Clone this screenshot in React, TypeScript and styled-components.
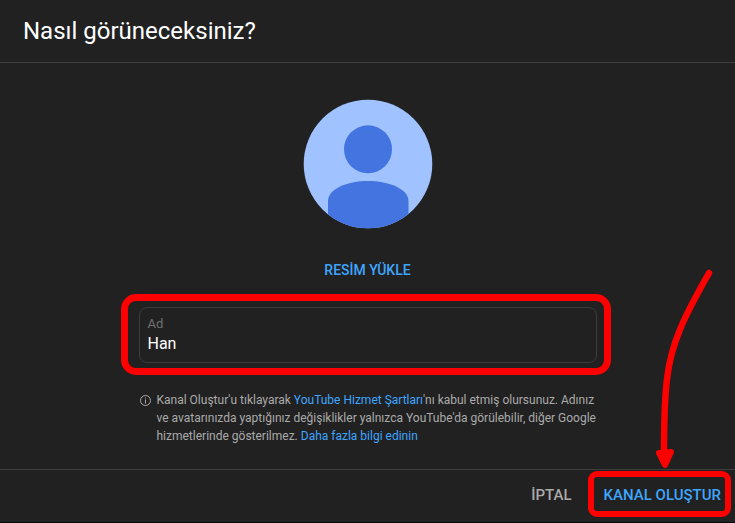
import React, { useState } from 'react';
import styled, { createGlobalStyle } from 'styled-components';

const GlobalStyle = createGlobalStyle`
  *, *::before, *::after { box-sizing: border-box; }
  html, body { margin: 0; background: #212121; }
  body { font-family: Roboto, "Liberation Sans", sans-serif; }
`;

const Dialog = styled.main`
  display: flex;
  flex-direction: column;
  min-height: 100vh;
  background: #212121;
  color: #fff;
  border-bottom: 1px solid #0b0707;
`;

const Header = styled.header`
  padding: 15px 23px;
  border-bottom: 1px solid #3e3e3e;
`;

const Title = styled.h1`
  margin: 0;
  font-size: 24px;
  line-height: 32px;
  font-weight: 400;
`;

const Body = styled.div`
  flex: 1;
  display: flex;
  flex-direction: column;
  align-items: center;
  padding: 36px 24px 24px;
`;

const Avatar = styled.svg`
  display: block;
  width: 130px;
  height: 130px;
`;

const TextButton = styled.button<{ $tone: 'accent' | 'muted'; $large?: boolean }>`
  border: 0;
  padding: 0;
  background: none;
  font-family: inherit;
  font-weight: 500;
  font-size: ${(p) => (p.$large ? 15 : 14)}px;
  line-height: 20px;
  color: ${(p) => (p.$tone === 'accent' ? '#3ea6ff' : '#aaa')};
  white-space: nowrap;
  cursor: pointer;
`;

const UploadRow = styled.div`
  display: flex;
  padding: 31px 0 27px;
`;

const Form = styled.div`
  width: 100%;
  max-width: 458px;
`;

const Field = styled.label`
  position: relative;
  display: block;
  padding: 8px;
  border: 1px solid #3c3c3c;
  border-radius: 8px;
`;

const FieldLabel = styled.span`
  display: block;
  font-size: 13px;
  line-height: 16px;
  color: #717171;
`;

const FieldInput = styled.input`
  display: block;
  width: 100%;
  height: 22px;
  padding: 1px 0 0;
  border: 0;
  outline: 0;
  background: transparent;
  color: #fff;
  font-family: inherit;
  font-size: 16px;
  line-height: 20px;
`;

const FieldHighlight = styled.span`
  position: absolute;
  inset: -14px -15px -13px -19px;
  border: 7px solid #f00;
  border-radius: 15px;
  pointer-events: none;
`;

const Notice = styled.div`
  display: flex;
  gap: 5px;
  margin-top: 28px;
`;

const InfoIcon = styled.svg`
  flex: none;
  width: 13px;
  height: 18px;
`;

const NoticeText = styled.p`
  margin: 0;
  font-size: 12px;
  line-height: 18px;
  color: #aaa;
`;

const Link = styled.a`
  color: #3ea6ff;
  text-decoration: none;
`;

const Footer = styled.footer`
  display: flex;
  justify-content: flex-end;
  align-items: center;
  gap: 32px;
  padding: 15px 14px 17px;
  border-top: 1px solid #3e3e3e;
`;

const PrimaryAction = styled.div`
  position: relative;
  display: flex;
`;

const ActionHighlight = styled.span`
  position: absolute;
  inset: -14px -10px -12px -16px;
  border: 6px solid #f00;
  border-radius: 9px;
  pointer-events: none;
`;

const Arrow = styled.svg`
  position: absolute;
  right: 0;
  bottom: 36px;
  width: 70px;
  height: 205px;
  pointer-events: none;
`;

export default function App() {
  const [name, setName] = useState('Han');
  return (
    <>
      <GlobalStyle />
      <Dialog lang="tr">
        <Header>
          <Title>Nasıl görüneceksiniz?</Title>
        </Header>
        <Body>
          <Avatar viewBox="0 0 130 130" role="img" aria-label="Avatar">
            <defs>
              <clipPath id="avatar-disc">
                <circle cx="65" cy="65" r="64.3" />
              </clipPath>
            </defs>
            <g clipPath="url(#avatar-disc)">
              <rect width="130" height="130" fill="#a0c2ff" />
              <circle cx="65" cy="50.3" r="24" fill="#4374e0" />
              <path d="M25 130V102C25 90 44 82 65 82S105.500 90 105.500 102V130Z" fill="#4374e0" />
            </g>
          </Avatar>
          <UploadRow>
            <TextButton type="button" $tone="accent">RESİM YÜKLE</TextButton>
          </UploadRow>
          <Form>
            <Field>
              <FieldLabel>Ad</FieldLabel>
              <FieldInput value={name} onChange={(e) => setName(e.target.value)} />
              <FieldHighlight />
            </Field>
            <Notice>
              <InfoIcon viewBox="0 0 13 18" aria-hidden="true">
                <circle cx="6.500" cy="9.500" r="5" fill="none" stroke="#aaa" />
                <path d="M6 6.500h1v1H6zM6 8.500h1v4H6z" fill="#aaa" />
              </InfoIcon>
              <NoticeText>
                Kanal Oluştur'u tıklayarak <Link href="#terms">YouTube Hizmet Şartları</Link>'nı kabul
                etmiş olursunuz. Adınız ve avatarınızda yaptığınız değişiklikler yalnızca YouTube'da
                görülebilir, diğer Google hizmetlerinde gösterilmez.{' '}
                <Link href="#more">Daha fazla bilgi edinin</Link>
              </NoticeText>
            </Notice>
          </Form>
        </Body>
        <Footer>
          <TextButton type="button" $tone="muted" $large>İPTAL</TextButton>
          <PrimaryAction>
            <TextButton type="button" $tone="accent" $large>KANAL OLUŞTUR</TextButton>
            <ActionHighlight />
            <Arrow viewBox="0 0 70 205" aria-hidden="true">
              <path
                d="M58 9C34 51 20 79 16 115C13 140 13 165 13 188"
                fill="none"
                stroke="#f00"
                strokeWidth="6.5"
                strokeLinecap="round"
              />
              <path d="M8 189L20 188L14 201Z" fill="#f00" stroke="#f00" strokeWidth="6" strokeLinejoin="round" />
            </Arrow>
          </PrimaryAction>
        </Footer>
      </Dialog>
    </>
  );
}
